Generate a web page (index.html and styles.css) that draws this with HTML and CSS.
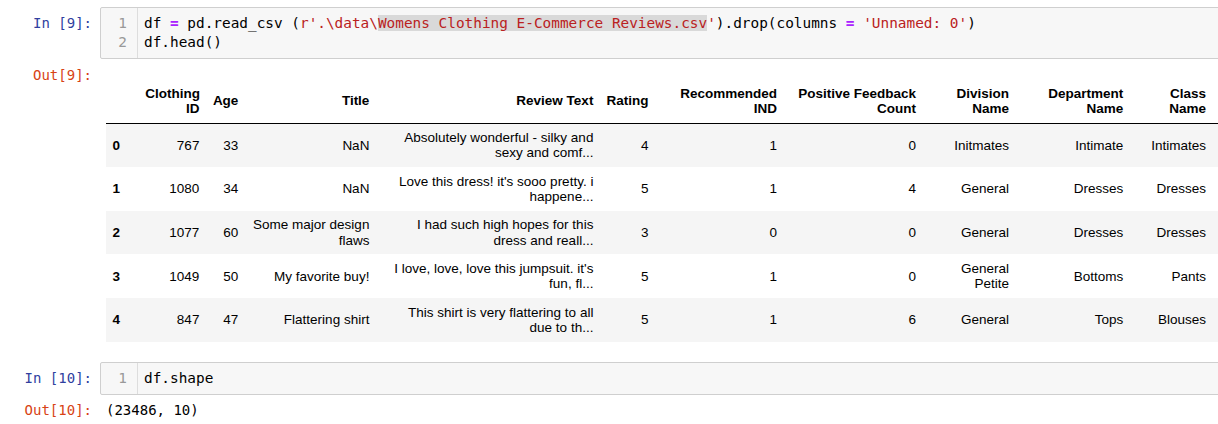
FILE: index.html
```html
<!DOCTYPE html>
<html>
<head>
<meta charset="utf-8">
<title>Notebook</title>
<link rel="stylesheet" href="styles.css">
</head>
<body>
<div class="notebook">
  <div class="cell">
    <div class="row">
      <div class="prompt in-prompt">In&nbsp;[9]:</div>
      <div class="editor">
        <div class="gutter"><div>1</div><div>2</div></div>
        <div class="code">
          <div class="line">df <span class="op">=</span> pd.read_csv (<span class="str">r'.\data\<span class="hl">Womens Clothing E-Commerce Reviews.csv</span>'</span>).drop(columns <span class="op">=</span> <span class="str">'Unnamed: 0'</span>)</div>
          <div class="line">df.head()</div>
        </div>
      </div>
    </div>
    <div class="row out-row">
      <div class="prompt out-prompt">Out[9]:</div>
      <div class="out-body">
        <table class="df">
          <colgroup>
            <col class="w-idx"><col class="w-cid"><col class="w-age"><col class="w-title"><col class="w-review"><col class="w-rating"><col class="w-rec"><col class="w-pos"><col class="w-div"><col class="w-dept"><col class="w-cls">
          </colgroup>
          <thead>
            <tr>
              <th></th>
              <th>Clothing<br>ID</th>
              <th>Age</th>
              <th>Title</th>
              <th>Review Text</th>
              <th>Rating</th>
              <th>Recommended<br>IND</th>
              <th>Positive Feedback<br>Count</th>
              <th>Division<br>Name</th>
              <th>Department<br>Name</th>
              <th class="last">Class<br>Name</th>
            </tr>
          </thead>
          <tbody>
            <tr>
              <th>0</th><td>767</td><td>33</td><td>NaN</td>
              <td>Absolutely wonderful - silky and<br>sexy and comf...</td>
              <td>4</td><td>1</td><td>0</td><td>Initmates</td><td>Intimate</td><td class="last">Intimates</td>
            </tr>
            <tr>
              <th>1</th><td>1080</td><td>34</td><td>NaN</td>
              <td>Love this dress! it's sooo pretty. i<br>happene...</td>
              <td>5</td><td>1</td><td>4</td><td>General</td><td>Dresses</td><td class="last">Dresses</td>
            </tr>
            <tr>
              <th>2</th><td>1077</td><td>60</td><td>Some major design<br>flaws</td>
              <td>I had such high hopes for this<br>dress and reall...</td>
              <td>3</td><td>0</td><td>0</td><td>General</td><td>Dresses</td><td class="last">Dresses</td>
            </tr>
            <tr>
              <th>3</th><td>1049</td><td>50</td><td>My favorite buy!</td>
              <td>I love, love, love this jumpsuit. it's<br>fun, fl...</td>
              <td>5</td><td>1</td><td>0</td><td>General<br>Petite</td><td>Bottoms</td><td class="last">Pants</td>
            </tr>
            <tr>
              <th>4</th><td>847</td><td>47</td><td>Flattering shirt</td>
              <td>This shirt is very flattering to all<br>due to th...</td>
              <td>5</td><td>1</td><td>6</td><td>General</td><td>Tops</td><td class="last">Blouses</td>
            </tr>
          </tbody>
        </table>
      </div>
    </div>
  </div>

  <div class="cell cell-2">
    <div class="row">
      <div class="prompt in-prompt">In&nbsp;[10]:</div>
      <div class="editor">
        <div class="gutter"><div>1</div></div>
        <div class="code">
          <div class="line">df.shape</div>
        </div>
      </div>
    </div>
    <div class="row out-row out-row-2">
      <div class="prompt out-prompt">Out[10]:</div>
      <div class="out-body out-text">(23486, 10)</div>
    </div>
  </div>
</div>
</body>
</html>
```

FILE: styles.css
```css
html, body {
  margin: 0;
  padding: 0;
  background: #ffffff;
  overflow: hidden;
}

body {
  font-family: "Liberation Sans", Arial, sans-serif;
  color: #000000;
}

.notebook {
  width: 1240px;
  padding-top: 7px;
}

.cell-2 {
  margin-top: 20px;
}

.row {
  display: flex;
  align-items: flex-start;
}

.prompt {
  flex: 0 0 100px;
  box-sizing: border-box;
  padding-right: 8px;
  text-align: right;
  font-family: "DejaVu Sans Mono", "Liberation Mono", monospace;
  font-size: 14px;
  line-height: 19px;
  white-space: nowrap;
}

.in-prompt {
  color: #303f9f;
  padding-top: 7px;
}

.out-prompt {
  color: #d84315;
}

.editor {
  flex: 1;
  display: flex;
  background: #f7f7f7;
  border: 1px solid #cfcfcf;
  border-radius: 2px;
  font-family: "DejaVu Sans Mono", "Liberation Mono", monospace;
  font-size: 14.4px;
  line-height: 19px;
}

.gutter {
  flex: 0 0 37px;
  box-sizing: border-box;
  padding: 6px 10px 6px 0;
  border-right: 1px solid #dddddd;
  text-align: right;
  color: #999999;
}

.code {
  flex: 1;
  padding: 6px 0 6px 6px;
  color: #000000;
}

.line {
  white-space: pre;
}

.op {
  color: #aa22ff;
  font-weight: bold;
}

.str {
  color: #ba2121;
}

.hl {
  background: #d9d9d9;
}

.out-row {
  margin-top: 7px;
}

.out-row-2 {
  margin-top: 6px;
}

.out-body {
  flex: 1;
  padding-left: 6px;
}

.out-text {
  font-family: "DejaVu Sans Mono", "Liberation Mono", monospace;
  font-size: 14px;
  line-height: 19px;
  white-space: pre;
}

.df {
  margin-top: 13px;
  border-collapse: collapse;
  table-layout: fixed;
  width: 1120px;
  font-size: 13.5px;
  line-height: 15.2px;
}

.w-idx { width: 32.7px; }
.w-cid { width: 67.3px; }
.w-age { width: 39px; }
.w-title { width: 131px; }
.w-review { width: 224px; }
.w-rating { width: 55px; }
.w-rec { width: 128.6px; }
.w-pos { width: 139px; }
.w-div { width: 93px; }
.w-dept { width: 114.3px; }
.w-cls { width: 96.1px; }

.df th,
.df td {
  padding: 6.6px;
  text-align: right;
  vertical-align: middle;
  white-space: nowrap;
  border: none;
}

.df .last {
  padding-right: 20px;
}

.df thead th {
  font-weight: bold;
  border-bottom: 1px solid #000000;
}

.df tbody th {
  font-weight: bold;
  text-align: left;
}

.df tbody tr:nth-child(odd) {
  background: #f5f5f5;
}
```
